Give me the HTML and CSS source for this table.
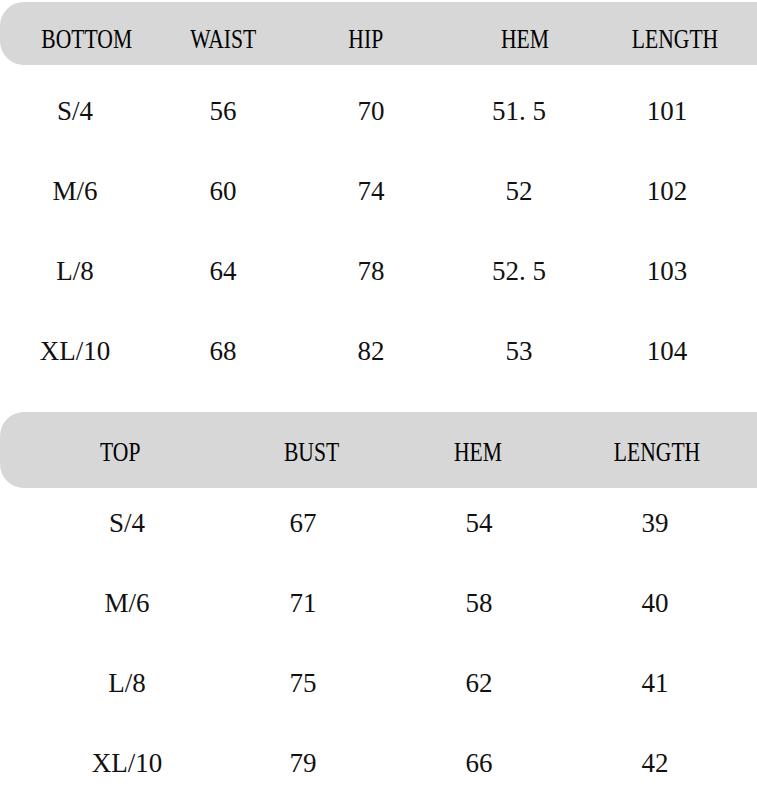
FILE: index.html
```html
<!DOCTYPE html>
<html>
<head>
<meta charset="utf-8">
<link rel="stylesheet" href="styles.css">
</head>
<body>
<section class="chart chart-bottom">
  <div class="bar bar-bottom">
    <div class="hcell"><span>BOTTOM</span></div>
    <div class="hcell"><span>WAIST</span></div>
    <div class="hcell"><span>HIP</span></div>
    <div class="hcell"><span>HEM</span></div>
    <div class="hcell"><span>LENGTH</span></div>
  </div>
  <div class="row row-bottom"><div>S/4</div><div>56</div><div>70</div><div>51. 5</div><div>101</div></div>
  <div class="row row-bottom"><div>M/6</div><div>60</div><div>74</div><div>52</div><div>102</div></div>
  <div class="row row-bottom"><div>L/8</div><div>64</div><div>78</div><div>52. 5</div><div>103</div></div>
  <div class="row row-bottom"><div>XL/10</div><div>68</div><div>82</div><div>53</div><div>104</div></div>
</section>
<section class="chart chart-top">
  <div class="bar bar-top">
    <div class="hcell"><span>TOP</span></div>
    <div class="hcell"><span>BUST</span></div>
    <div class="hcell"><span>HEM</span></div>
    <div class="hcell"><span>LENGTH</span></div>
  </div>
  <div class="row row-top"><div>S/4</div><div>67</div><div>54</div><div>39</div></div>
  <div class="row row-top"><div>M/6</div><div>71</div><div>58</div><div>40</div></div>
  <div class="row row-top"><div>L/8</div><div>75</div><div>62</div><div>41</div></div>
  <div class="row row-top"><div>XL/10</div><div>79</div><div>66</div><div>42</div></div>
</section>
</body>
</html>
```

FILE: styles.css
```css
html, body {
  margin: 0;
  padding: 0;
  background: #ffffff;
}
body {
  width: 757px;
  height: 794px;
  overflow: hidden;
  font-family: "Liberation Serif", "Times New Roman", serif;
  color: #000;
}
.chart {
  display: flex;
  flex-direction: column;
}
.chart-bottom {
  padding-top: 2px;
}
.chart-top {
  margin-top: 27px;
}
.bar {
  display: grid;
  box-sizing: border-box;
  background: #d7d7d7;
  border-radius: 24px 0 0 24px;
  font-size: 27px;
  line-height: 31px;
}
.bar-bottom {
  height: 63px;
  padding-top: 22px;
  grid-template-columns: 174px 98px 188px 130px 170px;
}
.bar-top {
  height: 76px;
  padding-top: 25px;
  grid-template-columns: 240px 144px 188px 170px;
}
.hcell {
  text-align: center;
  white-space: nowrap;
}
.hcell span {
  display: inline-block;
  transform: scaleX(0.8);
  transform-origin: center;
}
.row {
  display: grid;
  box-sizing: border-box;
  height: 80px;
  font-size: 27px;
  line-height: 31px;
  color: #111;
}
.row > div {
  text-align: center;
  white-space: nowrap;
}
.row-bottom {
  padding-left: 1px;
  padding-top: 31px;
  grid-template-columns: repeat(5, 148px);
}
.row-top {
  padding-left: 39px;
  padding-top: 20px;
  grid-template-columns: repeat(4, 176px);
}
```
